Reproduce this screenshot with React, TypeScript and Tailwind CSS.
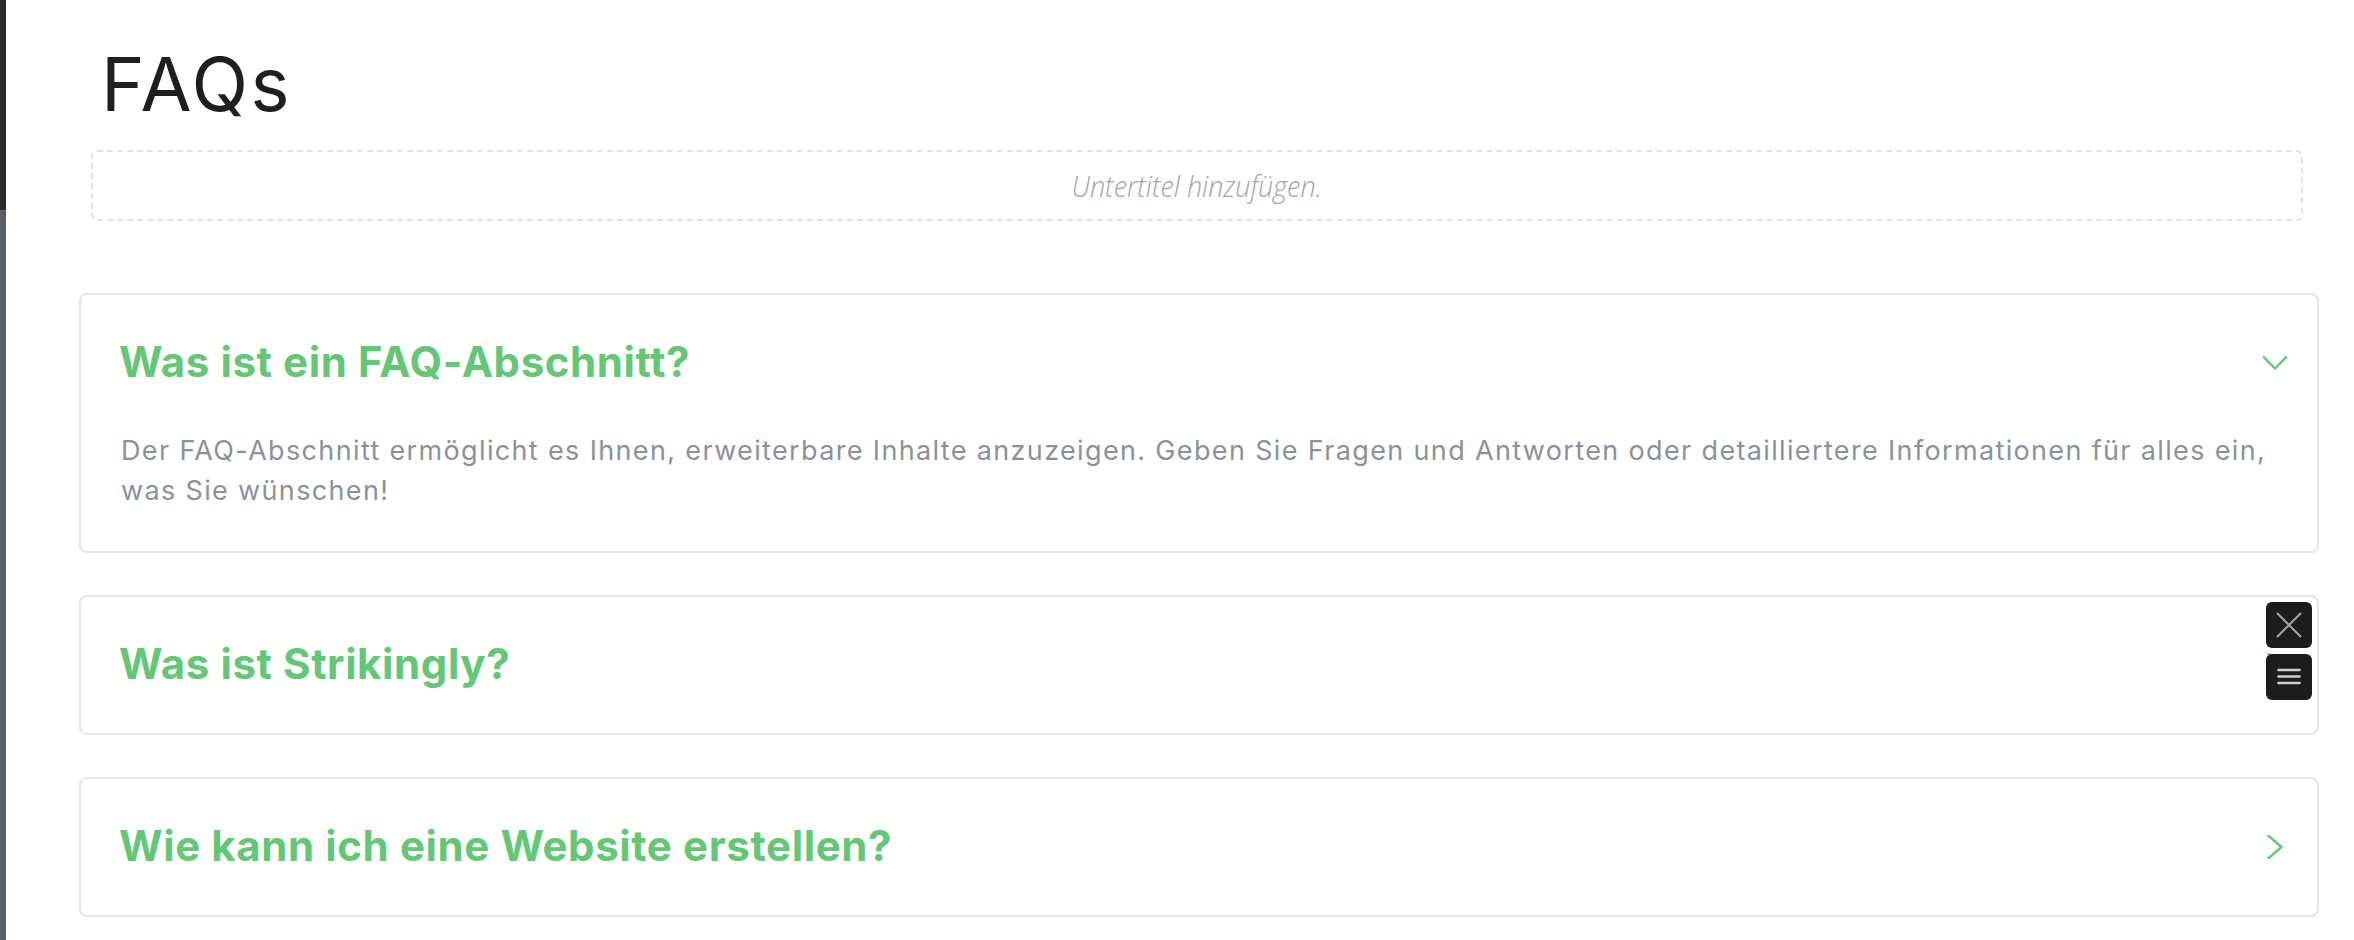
import React from "react";

const green = "#63c776";

function ChevronDown() {
  return (
    <svg width="24" height="24" viewBox="0 0 24 24" fill="none" className="shrink-0">
      <path d="M0.8 6 L12 17.5 L23.2 6" stroke={green} strokeWidth="2.4" strokeLinecap="round" strokeLinejoin="round" />
    </svg>
  );
}

function ChevronRight() {
  return (
    <svg width="24" height="24" viewBox="0 0 24 24" fill="none" className="shrink-0">
      <path d="M5.5 0.8 L18.5 12 L5.5 23.2" stroke={green} strokeWidth="2.4" strokeLinecap="round" strokeLinejoin="round" />
    </svg>
  );
}

function Question({ text, icon }: { text: string; icon: React.ReactNode }) {
  return (
    <div className="flex h-[136px] items-center justify-between pl-[38px] pr-[30px]">
      <h3
        className="mb-[3px] text-[42px] font-bold leading-none tracking-[0.6px] text-[#63c776]"
        style={{ fontFamily: "Inter, 'Noto Sans', sans-serif" }}
      >
        {text}
      </h3>
      {icon}
    </div>
  );
}

export default function App() {
  return (
    <div className="flex h-[940px] w-[2354px] overflow-hidden bg-white">
      <div className="flex w-[6px] shrink-0 flex-col">
        <div className="h-[210px] bg-[#2b2b2b]" />
        <div className="flex-1 bg-[#5b606c]" />
      </div>
      <main className="flex-1 pl-[73px] pr-[35px]" style={{ fontFamily: "Inter, 'Noto Sans', sans-serif" }}>
        <h1 className="ml-[22px] mt-[48px] text-[74px] font-normal leading-[72px] tracking-[2.5px] text-[#1f1f21]">FAQs</h1>
        <div className="ml-[12px] mr-[16px] mt-[30px] flex h-[71px] items-center justify-center rounded-[6px] border-2 border-dashed border-[#e2e2e2]">
          <span
            className="inline-block origin-center scale-x-[0.93] text-[29px] font-light italic text-[#a3a3a3]"
            style={{ fontFamily: "'Open Sans', sans-serif" }}
          >
            Untertitel hinzufügen.
          </span>
        </div>
        <div className="mt-[72px] flex flex-col gap-[42px]">
          <div className="rounded-[8px] border-2 border-[#e4e4e8]">
            <Question text="Was ist ein FAQ-Abschnitt?" icon={<ChevronDown />} />
            <p className="pb-[40px] pl-[40px] pr-[30px] text-[27px] leading-[40px] tracking-[1.35px] text-[#8b919b]">
              Der FAQ-Abschnitt ermöglicht es Ihnen, erweiterbare Inhalte anzuzeigen. Geben Sie Fragen und Antworten oder detailliertere Informationen für alles ein,
              <br />
              was Sie wünschen!
            </p>
          </div>
          <div className="relative rounded-[8px] border-2 border-[#e4e4e8]">
            <Question text="Was ist Strikingly?" icon={<ChevronRight />} />
            <div className="absolute right-[5px] top-[5px] flex flex-col gap-[6px]">
              <button className="flex h-[46px] w-[46px] items-center justify-center rounded-[6px] bg-[#1c1c1c]">
                <svg width="46" height="46" viewBox="0 0 46 46" fill="none">
                  <path d="M11.5 11.5 L34.5 34.5 M34.5 11.5 L11.5 34.5" stroke="#a3a3a3" strokeWidth="2" strokeLinecap="round" />
                </svg>
              </button>
              <button className="flex h-[46px] w-[46px] items-center justify-center rounded-[6px] bg-[#1c1c1c]">
                <svg width="46" height="46" viewBox="0 0 46 46" fill="none">
                  <path d="M12.5 16 H33.5 M12.5 22.5 H33.5 M12.5 29 H33.5" stroke="#d0d0d0" strokeWidth="2.6" strokeLinecap="round" />
                </svg>
              </button>
            </div>
          </div>
          <div className="rounded-[8px] border-2 border-[#e4e4e8]">
            <Question text="Wie kann ich eine Website erstellen?" icon={<ChevronRight />} />
          </div>
        </div>
      </main>
    </div>
  );
}
